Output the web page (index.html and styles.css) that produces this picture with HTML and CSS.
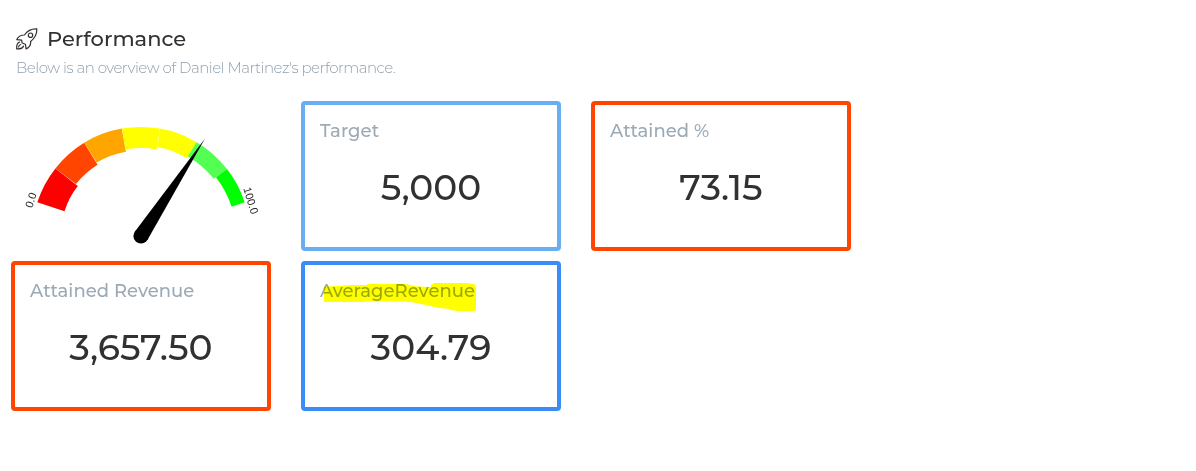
FILE: index.html
```html
<!DOCTYPE html>
<html lang="en">
<head>
<meta charset="utf-8">
<title>Performance</title>
<link rel="stylesheet" href="styles.css">
</head>
<body>
<header class="header">
  <h1 class="title">
    <svg class="rocket" width="22" height="22" viewBox="0 0 22 22" fill="none" stroke="currentColor" stroke-width="1.2" stroke-linejoin="round" stroke-linecap="round">
      <path d="M20.8.9C15.6.6 11.4 2.8 8.4 7 5 7 2.2 8.5.8 11.6L5.6 12.2 6.2 15 9.4 16.2 10.1 20.9C13.1 19.5 15 16.9 14.6 13.4 19.2 10.1 21 6 20.8.9Z"/>
      <circle cx="14.5" cy="7.2" r="2.2"/>
      <path d="M3.6 14.2C1.2 14.7.5 17.2.7 20.9 4.6 21.1 6.9 20.2 7.5 18M4.6 16.5C3.2 17 2.7 17.9 2.6 19"/>
    </svg>
    <span>Performance</span>
  </h1>
  <p class="subtitle">Below is an overview of Daniel Martinez's performance.</p>
</header>
<main class="cards">
  <svg class="gauge" viewBox="11 101 260 150">
    <path fill="#f00" d="M37.3 202.3A109 109 0 0 1 55.4 168.4L77.8 186.1A80.4 80.4 0 0 0 64.5 211.2Z"/>
    <path fill="#ff4500" d="M55.4 168.4A109 109 0 0 1 84.1 142.7L97.6 164.8A83.2 83.2 0 0 0 76 184.1Z"/>
    <path fill="#ffa500" d="M84.1 142.7A109 109 0 0 1 121.8 128.6L125.9 151.7A85.7 85.7 0 0 0 96.7 162.5Z"/>
    <path fill="#ff0" d="M121.8 128.6A109 109 0 0 1 160 128.6L156.7 149.4A88 88 0 0 0 125.7 149.4Z"/>
    <path fill="#ff0" d="M160.2 128.6A109 109 0 0 1 196.5 142.2L187.2 158.3A90.5 90.5 0 0 0 157.5 147Z"/>
    <path fill="#54ff54" d="M196.5 142.2A109 109 0 0 1 227 169L213.8 178.7A92.7 92.7 0 0 0 187.8 156.4Z"/>
    <path fill="#0f0" d="M227 169A109 109 0 0 1 244.7 202.3L231.6 206.7A95.3 95.3 0 0 0 215.9 177.2Z"/>
    <path d="M134.6 232 205 138.5 147.4 240.1Z"/>
    <circle cx="141" cy="236" r="7.6"/>
    <text class="tick" text-anchor="middle" transform="translate(34.5 201.3) rotate(-73)">0.0</text>
    <text class="tick" text-anchor="middle" transform="translate(247.2 201.7) rotate(73)">100.0</text>
  </svg>
  <section class="card card-sky">
    <h2 class="label">Target</h2>
    <div class="value">5,000</div>
  </section>
  <section class="card card-red">
    <h2 class="label">Attained %</h2>
    <div class="value">73.15</div>
  </section>
  <section class="card card-red">
    <h2 class="label">Attained Revenue</h2>
    <div class="value">3,657.50</div>
  </section>
  <section class="card card-blue">
    <h2 class="label">AverageRevenue</h2>
    <svg class="marker" width="160" height="32" viewBox="320 281 160 32">
      <path fill="#ff0" d="M324 302V286.5L340 286 352 285H367V284H405L418 286.5 431 287V285L434 283H466L474 284 476 286V310L474 311H458L450 310V309L439 308 428 305.5 417 303 405 301.5H365V302Z"/>
    </svg>
    <div class="value">304.79</div>
  </section>
</main>
</body>
</html>
```
FILE: styles.css
```css
body {
  margin: 0;
  background: #fff;
  color: #303133;
  font-family: Montserrat, Inter, "Open Sans", sans-serif;
}
.header {
  height: 77px;
  padding: 24px 16px 0;
}
.title {
  display: flex;
  align-items: center;
  gap: 9px;
  height: 28px;
  margin: 0;
  font-size: 21px;
  font-weight: 500;
}
.rocket {
  flex: none;
  margin-top: 1px;
}
.subtitle {
  margin: 5px 0 0;
  color: #8f9fac;
  font-size: 15px;
  font-weight: 300;
  line-height: 22px;
  letter-spacing: -.5px;
}
.cards {
  display: grid;
  grid-template-columns: repeat(3, 260px);
  grid-auto-rows: 150px;
  gap: 10px 30px;
  padding-left: 11px;
}
.gauge {
  width: 260px;
  height: 150px;
}
.tick {
  font: 11px "Liberation Sans", Arial, sans-serif;
  fill: #222;
}
.card {
  position: relative;
  box-sizing: border-box;
  border: 4px solid;
  border-radius: 4px;
  padding: 15px;
}
.card-sky { border-color: #68aef2; }
.card-red { border-color: #ff4500; }
.card-blue { border-color: #3a8cf6; }
.label {
  margin: 0;
  color: #9caab6;
  font-size: 18px;
  font-weight: 500;
  line-height: 22px;
  letter-spacing: .04px;
}
.value {
  margin-top: 23px;
  color: #303133;
  font-size: 36px;
  font-weight: 500;
  line-height: 44px;
  text-align: center;
}
.marker {
  position: absolute;
  left: 15px;
  top: 16px;
  mix-blend-mode: multiply;
}
```
